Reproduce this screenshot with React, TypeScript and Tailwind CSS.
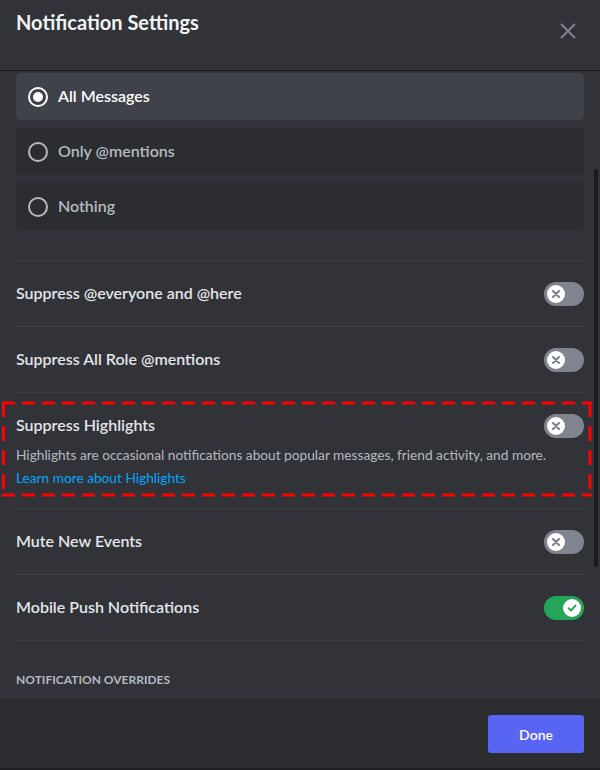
import React from 'react';

const font = { fontFamily: 'Lato, "Noto Sans", sans-serif' };

const Radio: React.FC<{ label: string; checked?: boolean }> = ({ label, checked }) => (
  <div
    className={`flex items-center h-[47px] rounded-[4px] px-3 gap-[10px] ${
      checked ? 'bg-[#404249]' : 'bg-[#2b2d31]'
    }`}
  >
    <div
      className={`w-5 h-5 rounded-full border-2 flex items-center justify-center ${
        checked ? 'border-white' : 'border-[#b5bac1]'
      }`}
    >
      {checked && <div className="w-[10px] h-[10px] rounded-full bg-white" />}
    </div>
    <span className={`text-[16px] font-semibold -mt-[2px] ${checked ? 'text-white' : 'text-[#b5bac1]'}`}>
      {label}
    </span>
  </div>
);

const Toggle: React.FC<{ on?: boolean }> = ({ on }) => (
  <div
    className={`relative w-10 h-6 shrink-0 rounded-full flex items-center px-[3px] ${
      on ? 'bg-[#23a55a] justify-end' : 'bg-[#80848e] justify-start'
    }`}
  >
    <div className="w-[18px] h-[18px] rounded-full bg-white flex items-center justify-center">
      {on ? (
        <svg width="12" height="12" viewBox="0 0 12 12">
          <path d="M2.6 6.2 L5 8.5 L9.4 3.6" fill="none" stroke="#23a55a" strokeWidth="2" strokeLinecap="round" strokeLinejoin="round" />
        </svg>
      ) : (
        <svg width="10" height="10" viewBox="0 0 10 10">
          <path d="M2 2 L8 8 M8 2 L2 8" stroke="#80848e" strokeWidth="2.2" strokeLinecap="round" />
        </svg>
      )}
    </div>
  </div>
);

const Row: React.FC<{ label: string; on?: boolean }> = ({ label, on }) => (
  <div className="border-t border-[#3f4147] pt-[21px] pb-[20px] flex items-center justify-between">
    <span className="text-[16px] font-semibold text-[#e3e5e8] -mt-[2px]">{label}</span>
    <Toggle on={on} />
  </div>
);

export default function App() {
  return (
    <div className="w-[600px] h-[770px] bg-[#313338] flex flex-col overflow-hidden border-b-2 border-[#1e1f22]" style={font}>
      {/* Header */}
      <div className="h-[71px] shrink-0 border-b border-[#1f2023] flex justify-between px-4 pt-[10px]">
        <h1 className="text-[20px] leading-6 font-bold text-[#f2f3f5]">Notification Settings</h1>
        <svg width="16" height="16" viewBox="0 0 16 16" className="mt-[13px] mr-[8px]">
          <path d="M1 1 L15 15 M15 1 L1 15" stroke="#80848e" strokeWidth="2" />
        </svg>
      </div>

      {/* Scrolling body */}
      <div className="relative flex-1 overflow-hidden">
        <div className="px-4 pt-[2px]">
          <div className="flex flex-col gap-2">
            <Radio label="All Messages" checked />
            <Radio label="Only @mentions" />
            <Radio label="Nothing" />
          </div>

          <div className="mt-[30px]">
            <Row label="Suppress @everyone and @here" />
            <Row label="Suppress All Role @mentions" />

            <div className="relative border-t border-[#3f4147] pt-[21px] pb-[20px]">
              <div className="flex items-center justify-between">
                <span className="text-[16px] font-semibold text-[#e3e5e8] -mt-[2px]">Suppress Highlights</span>
                <Toggle />
              </div>
              <p className="mt-[7px] text-[13.7px] leading-5 text-[#b5bac1]">
                Highlights are occasional notifications about popular messages, friend activity, and more.
              </p>
              <a className="block mt-[3px] text-[13.7px] leading-5 text-[#00a8fc]">Learn more about Highlights</a>
            </div>

            <Row label="Mute New Events" />
            <Row label="Mobile Push Notifications" on />
            <div className="border-t border-[#3f4147]" />
          </div>

          <div className="mt-[31px] text-[12px] leading-4 font-bold uppercase text-[#b5bac1]">
            Notification Overrides
          </div>
        </div>

        {/* scroll thumb */}
        <div className="absolute right-[2px] top-[98px] w-1 h-[398px] rounded-full bg-[#1a1b1e]" />

        {/* red dashed annotation */}
        <svg className="absolute left-0 top-[329px]" width="600" height="100">
          <line x1="2" y1="3" x2="592" y2="3" stroke="#ff0000" strokeWidth="3" strokeDasharray="13 7" />
          <line x1="2" y1="95" x2="592" y2="95" stroke="#ff0000" strokeWidth="3" strokeDasharray="13 7" />
          <line x1="3.5" y1="2" x2="3.5" y2="96" stroke="#ff0000" strokeWidth="3" strokeDasharray="15 9" />
          <line x1="590" y1="2" x2="590" y2="96" stroke="#ff0000" strokeWidth="3" strokeDasharray="15 9" />
        </svg>
      </div>

      {/* Footer */}
      <div className="h-[69px] shrink-0 bg-[#2b2d31] flex justify-end items-start px-4 pt-4">
        <button className="w-24 h-[38px] rounded-[3px] bg-[#5865f2] text-white text-[14px] font-semibold">Done</button>
      </div>
    </div>
  );
}
